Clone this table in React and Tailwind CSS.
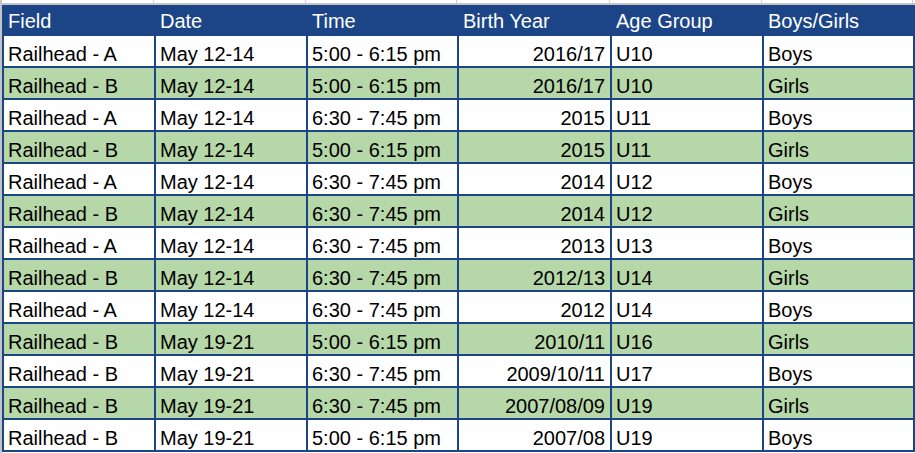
import React from 'react';

const COLS = 'grid grid-cols-[150px_150px_149px_151px_150px_149px] gap-x-[2px]';

const ROWS = [
  ['Railhead - A', 'May 12-14', '5:00 - 6:15 pm', '2016/17', 'U10', 'Boys'],
  ['Railhead - B', 'May 12-14', '5:00 - 6:15 pm', '2016/17', 'U10', 'Girls'],
  ['Railhead - A', 'May 12-14', '6:30 - 7:45 pm', '2015', 'U11', 'Boys'],
  ['Railhead - B', 'May 12-14', '5:00 - 6:15 pm', '2015', 'U11', 'Girls'],
  ['Railhead - A', 'May 12-14', '6:30 - 7:45 pm', '2014', 'U12', 'Boys'],
  ['Railhead - B', 'May 12-14', '6:30 - 7:45 pm', '2014', 'U12', 'Girls'],
  ['Railhead - A', 'May 12-14', '6:30 - 7:45 pm', '2013', 'U13', 'Boys'],
  ['Railhead - B', 'May 12-14', '6:30 - 7:45 pm', '2012/13', 'U14', 'Girls'],
  ['Railhead - A', 'May 12-14', '6:30 - 7:45 pm', '2012', 'U14', 'Boys'],
  ['Railhead - B', 'May 19-21', '5:00 - 6:15 pm', '2010/11', 'U16', 'Girls'],
  ['Railhead - B', 'May 19-21', '6:30 - 7:45 pm', '2009/10/11', 'U17', 'Boys'],
  ['Railhead - B', 'May 19-21', '6:30 - 7:45 pm', '2007/08/09', 'U19', 'Girls'],
  ['Railhead - B', 'May 19-21', '5:00 - 6:15 pm', '2007/08', 'U19', 'Boys'],
];

const HEADERS = ['Field', 'Date', 'Time', 'Birth Year', 'Age Group', 'Boys/Girls'];

export default function App() {
  return (
    <div
      className="w-[915px] h-[453px] bg-white overflow-hidden flex"
      style={{ fontFamily: '"Liberation Sans", Arial, sans-serif' }}
    >
      {/* sheet gridline on the left */}
      <div className="w-[2px] shrink-0 bg-[#c4c4c4]" />

      <div className="flex flex-col">
        {/* gridlines above the table */}
        <div className="h-[5px] flex flex-col">
          <div className="h-[3px] pl-[2px] bg-white">
            <div className={COLS + ' h-full'}>
              {HEADERS.map((h, i) => (
                <div key={i} className="border-r border-[#d0d0d0]" />
              ))}
            </div>
          </div>
          <div className="h-[2px] bg-[#c4c4c4]" />
        </div>

        {/* table */}
        <div className="bg-[#1c4587] px-[2px] pb-[2px] flex flex-col gap-y-[2px]">
          <div className={COLS + ' h-[29px]'}>
            {HEADERS.map((h) => (
              <div key={h} className="flex items-end pl-[4px] pb-[1px] text-[20px] leading-[23px] text-white">
                {h}
              </div>
            ))}
          </div>

          {ROWS.map((r, i) => {
            const bg = i % 2 === 1 ? 'bg-[#b6d7a8]' : 'bg-white';
            return (
              <div key={i} className={COLS + ' h-[30px]'}>
                {r.map((c, j) => (
                  <div
                    key={j}
                    className={
                      bg +
                      ' flex items-end text-[20px] leading-[23px] text-black whitespace-nowrap ' +
                      (j === 3 ? 'justify-end pr-[5px]' : 'pl-[4px]')
                    }
                  >
                    {c}
                  </div>
                ))}
              </div>
            );
          })}
        </div>
      </div>
    </div>
  );
}
